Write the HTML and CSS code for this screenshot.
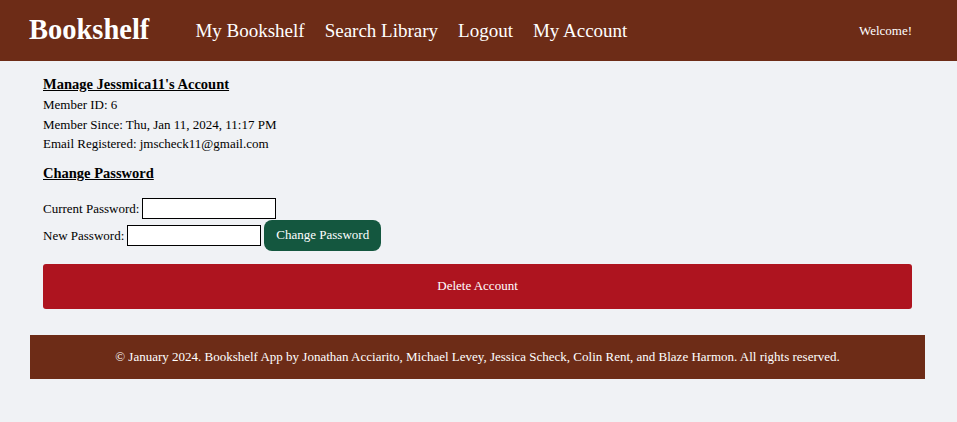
FILE: index.html
```html
<!DOCTYPE html>
<html>
<head>
<meta charset="utf-8">
<link rel="stylesheet" href="styles.css">
</head>
<body>
<header class="topbar">
  <div class="brand">Bookshelf</div>
  <nav class="nav">
    <a class="nav-link">My Bookshelf</a>
    <a class="nav-link">Search Library</a>
    <a class="nav-link">Logout</a>
    <a class="nav-link">My Account</a>
  </nav>
  <div class="welcome">Welcome!</div>
</header>
<main class="page">
  <section class="account">
    <h2 class="heading">Manage Jessmica11's Account</h2>
    <p class="line">Member ID: 6</p>
    <p class="line">Member Since: Thu, Jan 11, 2024, 11:17 PM</p>
    <p class="line">Email Registered: jmscheck11@gmail.com</p>
    <h2 class="heading heading-pw">Change Password</h2>
    <form class="pwform">
      <div class="row"><label>Current Password:</label><input class="field" type="password"></div>
      <div class="row"><label>New Password:</label><input class="field" type="password"><button type="button" class="btn-green">Change Password</button></div>
    </form>
    <button type="button" class="btn-delete">Delete Account</button>
  </section>
  <footer class="footer">© January 2024. Bookshelf App by Jonathan Acciarito, Michael Levey, Jessica Scheck, Colin Rent, and Blaze Harmon. All rights reserved.</footer>
</main>
</body>
</html>
```
FILE: styles.css
```css
html, body { margin: 0; padding: 0; }
body {
  background: #f0f2f5;
  font-family: "Liberation Serif", "Times New Roman", serif;
  color: #000;
  font-size: 13px;
}
.topbar {
  height: 61px;
  background: #6d2c17;
  color: #fff;
  display: flex;
  align-items: center;
  padding: 0 45px 0 29px;
}
.brand {
  font-size: 28.5px;
  font-weight: bold;
  margin-right: 46px;
  padding-bottom: 2px;
}
.nav { display: flex; gap: 20px; flex: 1; }
.nav-link { font-size: 19px; color: #fff; }
.welcome { font-size: 13px; }
.page { padding: 0 32px 0 30px; }
.account { padding: 14px 13px 0 13px; }
.heading {
  font-size: 14.5px;
  font-weight: bold;
  text-decoration: underline;
  margin: 0 0 1px 0;
  line-height: 19px;
}
.heading-pw { margin-top: 10px; margin-bottom: 15px; }
.line { margin: 0; line-height: 19.5px; }
.pwform { display: flex; flex-direction: column; gap: 6px; }
.row { display: flex; align-items: center; }
.row label { margin-right: 3px; line-height: 19px; }
.field {
  width: 132px;
  height: 19px;
  box-sizing: content-box;
  border: 1px solid #000;
  padding: 0;
  margin: 0;
  background: #fff;
}
.btn-green {
  margin: -5px 0 -5px 3px;
  background: #14573f;
  color: #fff;
  border: none;
  border-radius: 8px;
  font-family: inherit;
  font-size: 13px;
  width: 117px;
  height: 31px;
  padding: 0;
}
.btn-delete {
  display: block;
  margin-top: 18px;
  width: 100%;
  height: 45px;
  background: #ae141f;
  color: #fff;
  border: none;
  border-radius: 3px;
  font-family: inherit;
  font-size: 13px;
}
.footer {
  margin-top: 26px;
  background: #6d2c17;
  color: #fff;
  height: 44px;
  display: flex;
  align-items: center;
  justify-content: center;
  font-size: 13px;
}
```
